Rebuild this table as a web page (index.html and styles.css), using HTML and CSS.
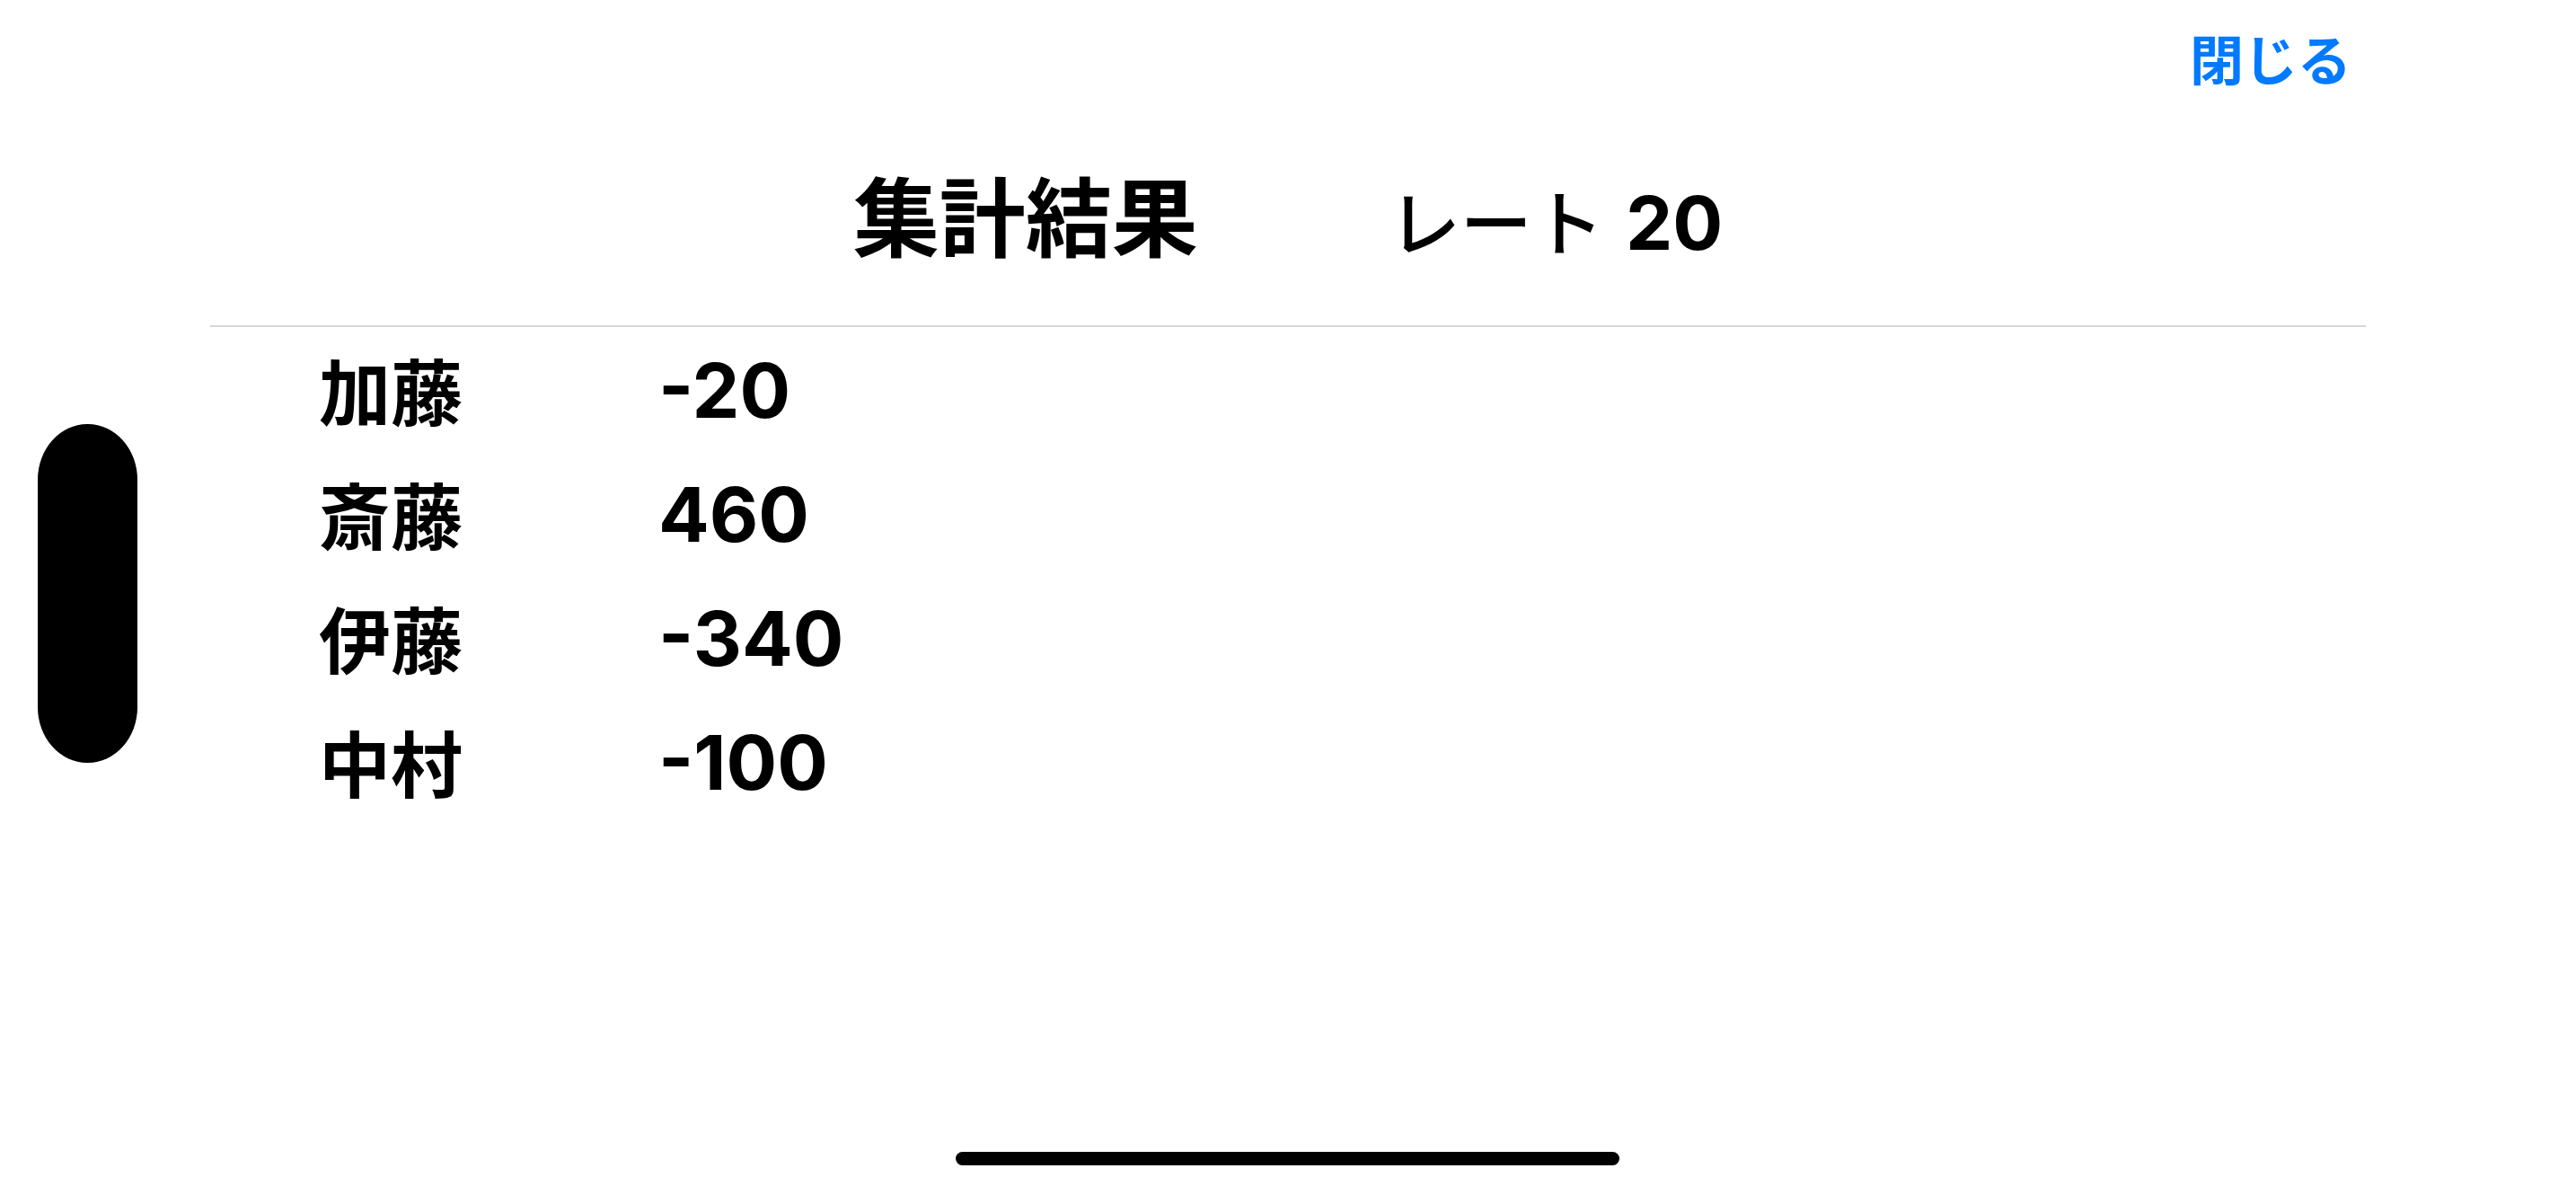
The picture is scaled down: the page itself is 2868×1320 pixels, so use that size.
FILE: index.html
```html
<!DOCTYPE html>
<html lang="ja">
<head>
<meta charset="utf-8">
<title>集計結果</title>
<link rel="stylesheet" href="styles.css">
</head>
<body>
<div class="screen">
  <header class="topbar">
    <button class="close-btn" type="button">閉じる</button>
  </header>
  <section class="title-row">
    <h1 class="title">集計結果</h1>
    <div class="rate"><span class="rate-label">レート</span><span class="rate-value">20</span></div>
  </section>
  <div class="divider"></div>
  <ul class="results">
    <li class="result"><span class="name">加藤</span><span class="score">-20</span></li>
    <li class="result"><span class="name">斎藤</span><span class="score">460</span></li>
    <li class="result"><span class="name">伊藤</span><span class="score">-340</span></li>
    <li class="result"><span class="name">中村</span><span class="score">-100</span></li>
  </ul>
  <div class="island"></div>
  <div class="home-indicator"></div>
</div>
</body>
</html>
```

FILE: styles.css
```css
html, body {
  margin: 0;
  padding: 0;
  height: 100%;
  background: #ffffff;
  overflow: hidden;
}

.screen {
  position: relative;
  width: 2868px;
  height: 1320px;
  background: #ffffff;
  color: #000000;
  font-family: "Noto Sans CJK JP", "Noto Sans", sans-serif;
}

.topbar {
  display: flex;
  justify-content: flex-end;
  padding: 34px 250px 0 0;
  height: 60px;
}

.close-btn {
  background: none;
  border: none;
  padding: 0;
  margin: 0;
  font-family: "Noto Sans CJK JP", sans-serif;
  font-size: 60px;
  line-height: 1;
  font-weight: 700;
  color: #007aff;
  cursor: pointer;
}

.title-row {
  display: flex;
  justify-content: center;
  align-items: baseline;
  gap: 212px;
  height: 268px;
  box-sizing: border-box;
  padding-top: 95px;
  margin: 0;
}

.title {
  margin: 0;
  font-family: "Noto Sans CJK JP", sans-serif;
  font-size: 96px;
  font-weight: 700;
  line-height: 1;
}

.rate {
  display: flex;
  align-items: baseline;
  font-family: "Noto Sans CJK JP", sans-serif;
  font-size: 80px;
  line-height: 1;
}

.rate-label {
  font-weight: 500;
}

.rate-value {
  margin-left: 24px;
  font-family: Inter, "Liberation Sans", sans-serif;
  font-weight: 700;
  font-size: 83px;
}

.divider {
  margin: 0 234px;
  height: 2px;
  background: #d6d6d6;
}

.results {
  list-style: none;
  margin: 0 234px;
  padding: 2px 0 0 121px;
  display: flex;
  flex-direction: column;
}

.result {
  display: grid;
  grid-template-columns: 378px auto;
  align-items: center;
  height: 138px;
}

.name {
  font-family: "Noto Sans CJK JP", sans-serif;
  font-size: 80px;
  font-weight: 700;
  line-height: 1;
  margin-bottom: 6px;
}

.score {
  font-family: Inter, "Liberation Sans", sans-serif;
  font-size: 84px;
  font-weight: 700;
  line-height: 1;
}

.island {
  position: absolute;
  left: 42px;
  top: 472px;
  width: 111px;
  height: 377px;
  background: #000000;
  border-radius: 55px / 62px;
}

.home-indicator {
  position: absolute;
  left: 1064px;
  top: 1282px;
  width: 739px;
  height: 15px;
  background: #000000;
  border-radius: 8px;
}
```
